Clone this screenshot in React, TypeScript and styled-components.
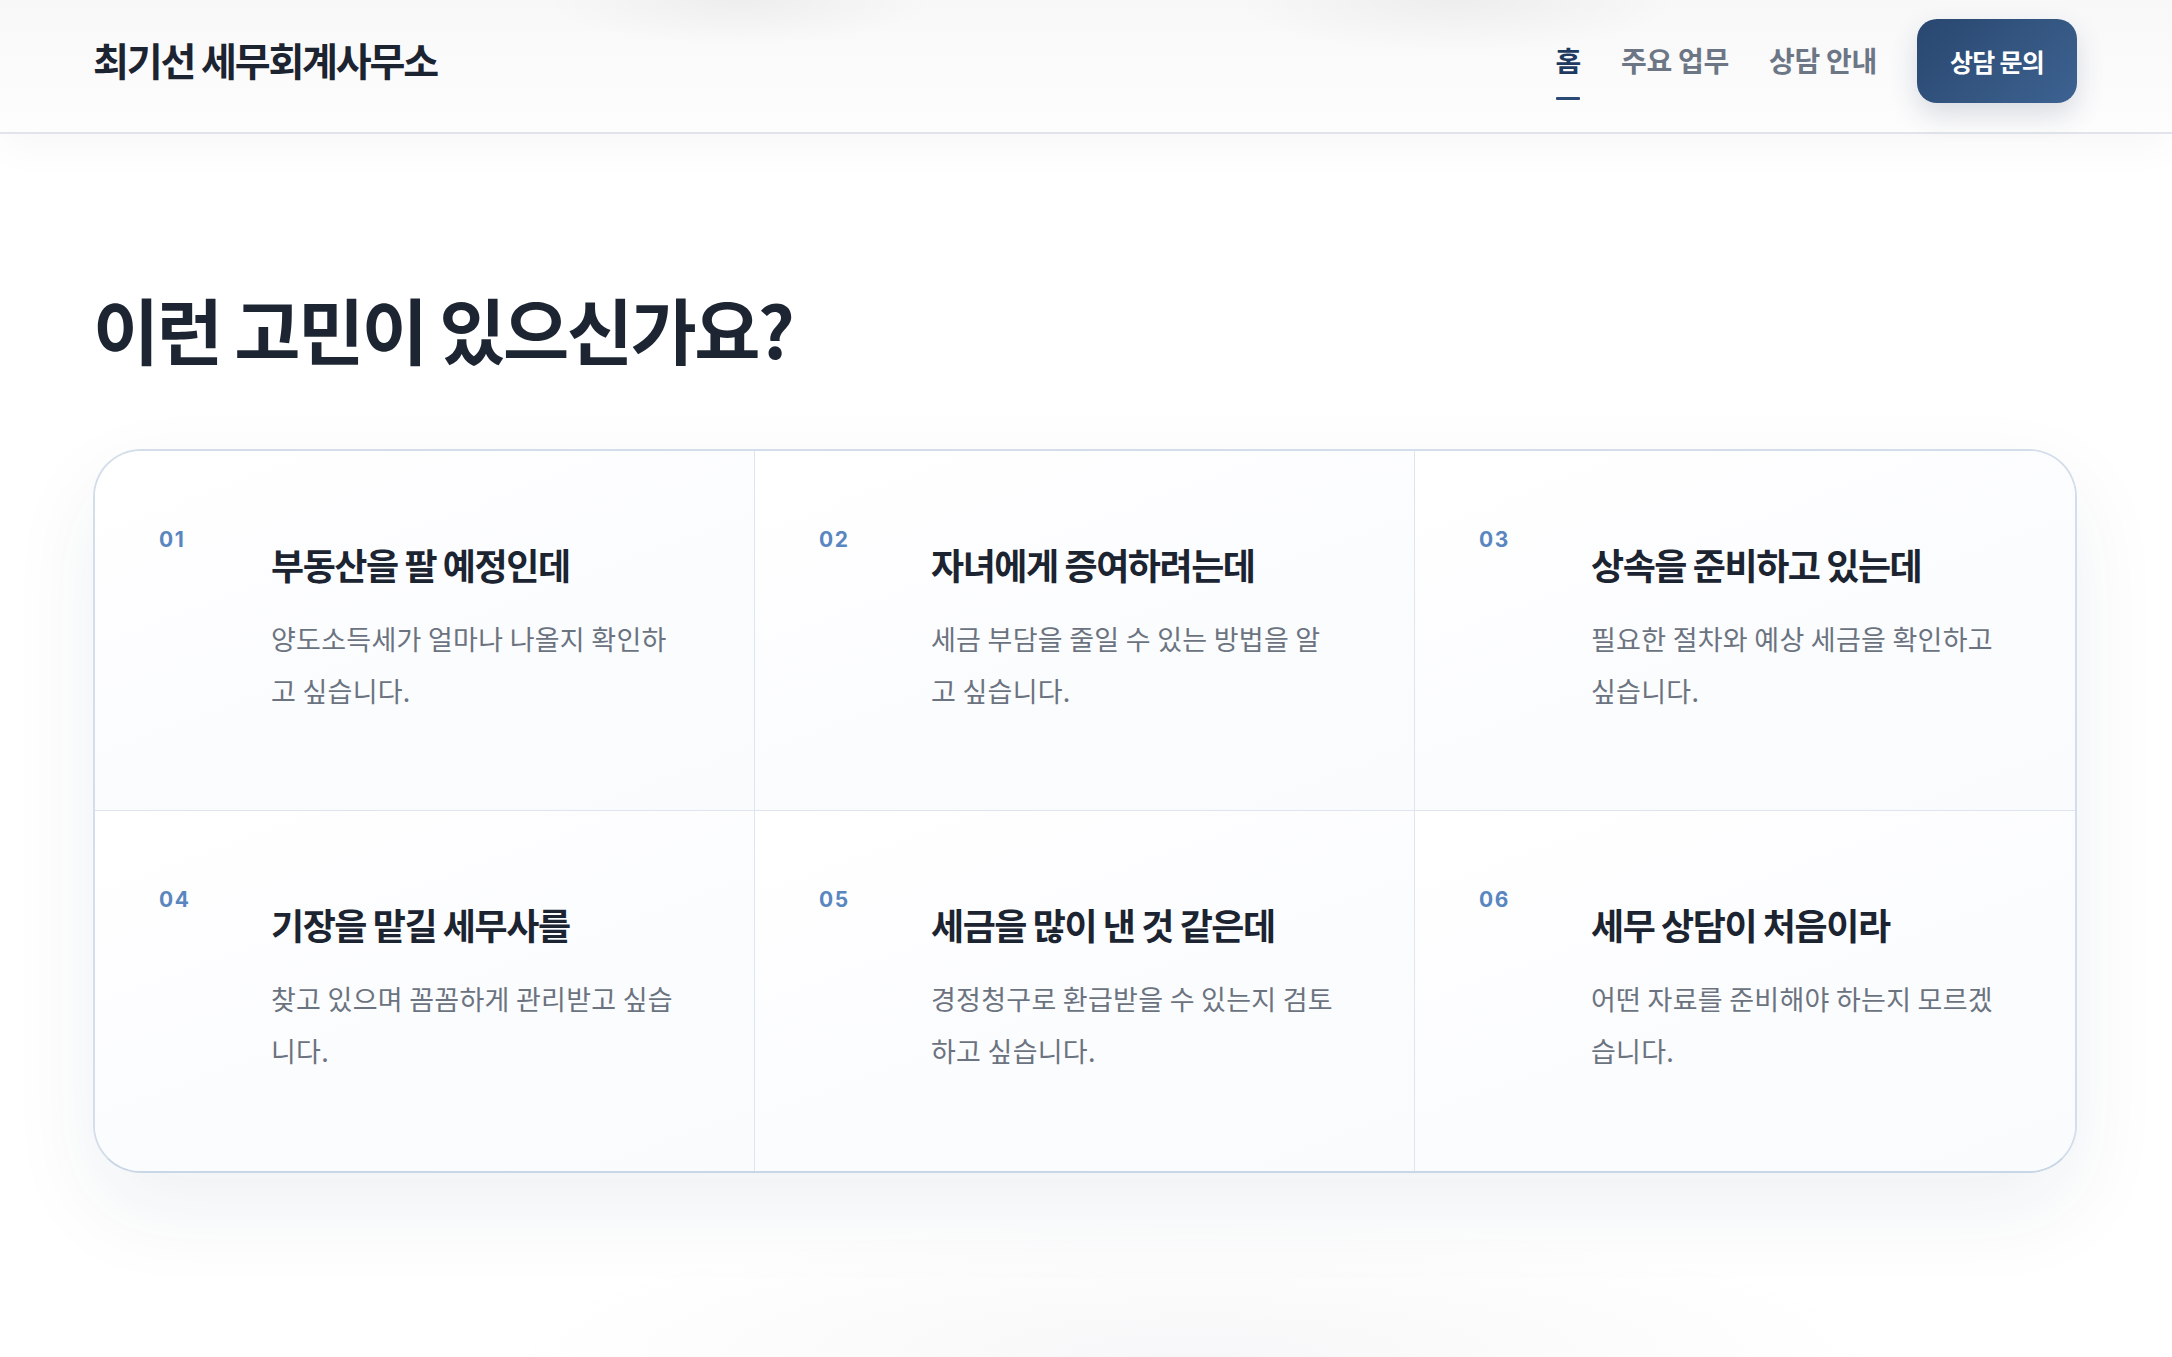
import React from "react";
import styled, { createGlobalStyle } from "styled-components";

const GlobalStyle = createGlobalStyle`
  html, body {
    margin: 0;
    padding: 0;
    background: #ffffff;
  }
  body {
    font-family: "Noto Sans CJK KR", "Noto Sans", sans-serif;
    color: #1c2531;
    overflow: hidden;
  }
  * { box-sizing: border-box; }
`;

const Page = styled.div`
  min-height: 1357px;
  background:
    radial-gradient(ellipse 1000px 200px at 55% 1357px, rgba(30, 45, 70, 0.04), transparent 70%),
    #ffffff;
`;

const Header = styled.header`
  display: flex;
  align-items: center;
  justify-content: space-between;
  box-sizing: content-box;
  height: 84px;
  padding: 19px 95px 29px 93px;
  border-bottom: 2px solid #e1e5eb;
  background:
    radial-gradient(ellipse 260px 60px at 34% 0px, rgba(0, 0, 0, 0.045), transparent 75%),
    radial-gradient(ellipse 300px 70px at 67% 0px, rgba(0, 0, 0, 0.045), transparent 75%),
    linear-gradient(180deg, #f8f8f9 0%, #fbfbfc 60%, #fdfdfd 100%);
  box-shadow: 0 12px 40px rgba(20, 30, 50, 0.035);
`;

const Logo = styled.div`
  padding-bottom: 4px;
  font-size: 39px;
  font-weight: 700;
  letter-spacing: -0.055em;
  color: #1b2430;
  line-height: 1.2;
`;

const Nav = styled.nav`
  display: flex;
  align-items: center;
  gap: 40px;
`;

const NavLink = styled.a<{ $active?: boolean }>`
  position: relative;
  font-size: 28px;
  font-weight: 700;
  letter-spacing: -0.01em;
  line-height: 1.4;
  color: ${(p) => (p.$active ? "#1f3a60" : "#6c7685")};
  text-decoration: none;
  cursor: pointer;

  &::after {
    content: "";
    display: ${(p) => (p.$active ? "block" : "none")};
    position: absolute;
    left: 0;
    right: 1px;
    bottom: -19px;
    height: 3px;
    background: #2b4a75;
    border-radius: 1px;
  }
`;

const CtaButton = styled.button`
  height: 84px;
  padding: 0 33px;
  border: none;
  border-radius: 20px;
  background: linear-gradient(135deg, #284670 0%, #33557f 50%, #3d6292 100%);
  color: #ffffff;
  font-family: "Noto Sans CJK KR", "Noto Sans", sans-serif;
  font-size: 25px;
  font-weight: 700;
  letter-spacing: -0.03em;
  box-shadow: 0 12px 28px rgba(30, 50, 80, 0.16);
  cursor: pointer;
`;

const Main = styled.main`
  padding: 0 95px 0 93px;
`;

const Heading = styled.h1`
  margin: 151px 0 0 0;
  font-size: 72px;
  font-weight: 700;
  line-height: 1.2;
  letter-spacing: -0.035em;
  color: #1c2531;
`;

const Grid = styled.section`
  margin-top: 78px;
  display: grid;
  grid-template-columns: repeat(3, 1fr);
  grid-auto-rows: 360px;
  border: 2px solid #d4deea;
  border-bottom-color: #c9d6e6;
  border-radius: 48px;
  overflow: hidden;
  background: #ffffff;
  box-shadow: 0 36px 90px rgba(30, 50, 90, 0.07);
`;

const Cell = styled.article<{ $col: number; $row: number }>`
  display: flex;
  align-items: flex-start;
  padding: 76px 30px 0 64px;
  border-right: ${(p) => (p.$col < 2 ? "1.5px solid #dfe5ee" : "none")};
  border-bottom: ${(p) => (p.$row < 1 ? "1.5px solid #dfe5ee" : "none")};
  background: linear-gradient(160deg, #ffffff 0%, #fbfcfe 55%, #f9fbfd 100%);
`;

const Num = styled.span`
  flex: 0 0 112px;
  font-family: Inter, "Noto Sans", sans-serif;
  font-size: 21px;
  font-weight: 700;
  line-height: 1.2;
  letter-spacing: 0.07em;
  color: #5a86bf;
`;

const Body = styled.div`
  display: flex;
  flex-direction: column;
  padding-top: 14px;
`;

const Title = styled.h2`
  margin: 0;
  font-size: 36px;
  font-weight: 700;
  line-height: 1.3;
  letter-spacing: -0.04em;
  color: #1b2430;
`;

const Desc = styled.p`
  margin: 25px 0 0 0;
  width: 408px;
  font-size: 27px;
  font-weight: 400;
  line-height: 52px;
  letter-spacing: 0.01em;
  color: #6b7380;
`;

const problems = [
  { n: "01", title: "부동산을 팔 예정인데", desc: "양도소득세가 얼마나 나올지 확인하고 싶습니다." },
  { n: "02", title: "자녀에게 증여하려는데", desc: "세금 부담을 줄일 수 있는 방법을 알고 싶습니다." },
  { n: "03", title: "상속을 준비하고 있는데", desc: "필요한 절차와 예상 세금을 확인하고 싶습니다." },
  { n: "04", title: "기장을 맡길 세무사를", desc: "찾고 있으며 꼼꼼하게 관리받고 싶습니다." },
  { n: "05", title: "세금을 많이 낸 것 같은데", desc: "경정청구로 환급받을 수 있는지 검토하고 싶습니다." },
  { n: "06", title: "세무 상담이 처음이라", desc: "어떤 자료를 준비해야 하는지 모르겠습니다." },
];

export default function App() {
  return (
    <Page>
      <GlobalStyle />
      <Header>
        <Logo>최기선 세무회계사무소</Logo>
        <Nav>
          <NavLink $active>홈</NavLink>
          <NavLink>주요 업무</NavLink>
          <NavLink>상담 안내</NavLink>
          <CtaButton>상담 문의</CtaButton>
        </Nav>
      </Header>
      <Main>
        <Heading>이런 고민이 있으신가요?</Heading>
        <Grid>
          {problems.map((p, i) => (
            <Cell key={p.n} $col={i % 3} $row={Math.floor(i / 3)}>
              <Num>{p.n}</Num>
              <Body>
                <Title>{p.title}</Title>
                <Desc>{p.desc}</Desc>
              </Body>
            </Cell>
          ))}
        </Grid>
      </Main>
    </Page>
  );
}
